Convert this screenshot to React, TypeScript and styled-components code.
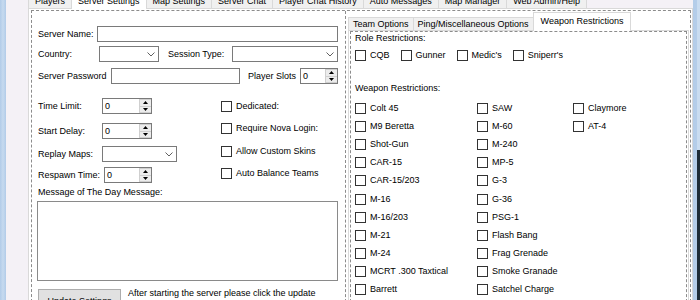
import styled, { createGlobalStyle } from "styled-components";

const GlobalStyle = createGlobalStyle`
  html, body {
    margin: 0;
    padding: 0;
  }
  body {
    width: 700px;
    height: 300px;
    overflow: hidden;
    background: #f3f1f4;
    font-family: "Liberation Sans", Arial, sans-serif;
    font-size: 9px;
    color: #000;
  }
`;

const mainTabs = [
  "Players",
  "Server Settings",
  "Map Settings",
  "Server Chat",
  "Player Chat History",
  "Auto Messages",
  "Map Manager",
  "Web Admin/Help",
];

const subTabs = ["Team Options", "Ping/Miscellaneous Options", "Weapon Restrictions"];

const roles = ["CQB", "Gunner", "Medic's", "Sniperr's"];

const weapons = [
  "Colt 45",
  "M9 Beretta",
  "Shot-Gun",
  "CAR-15",
  "CAR-15/203",
  "M-16",
  "M-16/203",
  "M-21",
  "M-24",
  "MCRT .300 Taxtical",
  "Barrett",
  "SAW",
  "M-60",
  "M-240",
  "MP-5",
  "G-3",
  "G-36",
  "PSG-1",
  "Flash Bang",
  "Frag Grenade",
  "Smoke Granade",
  "Satchel Charge",
  "Claymore",
  "AT-4",
];

const Chevron = () => (
  <svg width="8" height="5" viewBox="0 0 8 5">
    <polyline points="0.5,0.5 4,4 7.5,0.5" fill="none" stroke="#606060" strokeWidth="1" />
  </svg>
);

const Combo = ({ w }: { w: number }) => (
  <ComboBox $w={w}>
    <Chevron />
  </ComboBox>
);

const Numeric = ({ w }: { w: number }) => (
  <NumBox $w={w}>
    <NumValue>0</NumValue>
    <Spinner>
      <SpinButton>
        <svg width="5" height="3" viewBox="0 0 5 3">
          <polygon points="2.5,0 5,3 0,3" fill="#000" />
        </svg>
      </SpinButton>
      <SpinButton>
        <svg width="5" height="3" viewBox="0 0 5 3">
          <polygon points="0,0 5,0 2.5,3" fill="#000" />
        </svg>
      </SpinButton>
    </Spinner>
  </NumBox>
);

const Check = ({ label }: { label: string }) => (
  <CheckItem>
    <CheckBox />
    <span>{label}</span>
  </CheckItem>
);

const App: React.FC = () => {
  return (
    <>
      <GlobalStyle />
      <Frame>
        <LeftEdge />
        <Gutter />
        <Window>
          <TabStrip>
            {mainTabs.map((t) => (
              <Tab key={t} $active={t === "Server Settings"}>
                {t}
              </Tab>
            ))}
          </TabStrip>
          <Page>
            <OuterBox>
              <LeftPanel>
                <Row $mt={0}>
                  <FieldLabel $w={59}>Server Name:</FieldLabel>
                  <TextBox $w={241} />
                </Row>
                <Row $mt={4}>
                  <FieldLabel $w={61}>Country:</FieldLabel>
                  <Combo w={60} />
                  <FieldLabel $w={64} $ml={9}>
                    Session Type:
                  </FieldLabel>
                  <Combo w={106} />
                </Row>
                <Row $mt={6}>
                  <FieldLabel $w={73}>Server Password</FieldLabel>
                  <TextBox $w={129} />
                  <FieldLabel $w={52} $ml={8}>
                    Player Slots
                  </FieldLabel>
                  <Numeric w={38} />
                </Row>

                <Section>
                  <LeftCol>
                    <Row $mt={0}>
                      <FieldLabel $w={64}>Time Limit:</FieldLabel>
                      <Numeric w={50} />
                    </Row>
                    <Row $mt={9}>
                      <FieldLabel $w={64}>Start Delay:</FieldLabel>
                      <Numeric w={50} />
                    </Row>
                    <Row $mt={7}>
                      <FieldLabel $w={64}>Replay Maps:</FieldLabel>
                      <Combo w={75} />
                    </Row>
                    <Row $mt={5}>
                      <FieldLabel $w={66}>Respawn Time:</FieldLabel>
                      <Numeric w={48} />
                    </Row>
                  </LeftCol>
                  <RightCol>
                    <CheckRow $mt={0}>
                      <Check label="Dedicated:" />
                    </CheckRow>
                    <CheckRow $mt={6}>
                      <Check label="Require Nova Login:" />
                    </CheckRow>
                    <CheckRow $mt={7}>
                      <Check label="Allow Custom Skins" />
                    </CheckRow>
                    <CheckRow $mt={6}>
                      <Check label="Auto Balance Teams" />
                    </CheckRow>
                  </RightCol>
                </Section>

                <Caption>Message of The Day Message:</Caption>
                <MessageBox />
                <BottomRow>
                  <Button>Update Settings</Button>
                  <HelpText>
                    After starting the server please click the update
                    <br />
                    settings button so that the new settings are applied.
                  </HelpText>
                </BottomRow>
              </LeftPanel>

              <RightSection>
                <SubTabStrip>
                  {subTabs.map((t) => (
                    <SubTab key={t} $active={t === "Weapon Restrictions"}>
                      {t}
                    </SubTab>
                  ))}
                </SubTabStrip>
                <SubPage>
                  <InnerBox>
                    <Caption>Role Restrictions:</Caption>
                    <RoleRow>
                      {roles.map((r) => (
                        <Check key={r} label={r} />
                      ))}
                    </RoleRow>
                    <WeaponCaption>Weapon Restrictions:</WeaponCaption>
                    <WeaponGrid>
                      {weapons.map((w) => (
                        <Check key={w} label={w} />
                      ))}
                    </WeaponGrid>
                  </InnerBox>
                </SubPage>
              </RightSection>
            </OuterBox>
          </Page>
        </Window>
        <RightEdge>
          <BlueBand />
          <OuterBand>
            <BandTop />
            <BandBottom />
          </OuterBand>
        </RightEdge>
      </Frame>
    </>
  );
};

const Frame = styled.div`
  display: flex;
  width: 700px;
  height: 300px;
  overflow: hidden;
`;
const LeftEdge = styled.div`
  width: 6px;
  flex-shrink: 0;
  background: linear-gradient(90deg, #b1cbe8 0, #c6daef 50%, #b1cbe8 100%);
`;
const Gutter = styled.div`
  width: 22px;
  flex-shrink: 0;
  background: #f4f1f6;
`;
const Window = styled.div`
  width: 665px;
  flex-shrink: 0;
  display: flex;
  flex-direction: column;
  background: #f4f1f6;
`;
const RightEdge = styled.div`
  width: 7px;
  flex-shrink: 0;
  display: flex;
`;
const BlueBand = styled.div`
  width: 4px;
  background: #b4cde9;
`;
const OuterBand = styled.div`
  flex: 1;
  display: flex;
  flex-direction: column;
`;
const BandTop = styled.div`
  height: 150px;
  background: #c9dcf0;
`;
const BandBottom = styled.div`
  flex: 1;
  background: #1d2c38;
`;

const TabStrip = styled.div`
  display: flex;
  align-items: flex-end;
  height: 18px;
  margin-top: -10px;
  position: relative;
  z-index: 1;
`;
const Tab = styled.div<{ $active: boolean }>`
  display: flex;
  align-items: flex-end;
  box-sizing: border-box;
  height: ${(p) => (p.$active ? "19px" : "18px")};
  margin-bottom: ${(p) => (p.$active ? "-1px" : "0")};
  padding: 0 6px ${(p) => (p.$active ? "2px" : "1px")};
  line-height: 11px;
  white-space: nowrap;
  background: ${(p) => (p.$active ? "#fff" : "#f0f0f0")};
  border: 1px solid #d9d9d9;
  border-bottom: none;
  margin-left: -1px;
  &:first-child {
    margin-left: 0;
  }
`;

const Page = styled.div`
  flex: 1;
  display: flex;
  background: #fff;
  border: 1px solid #d9d9d9;
  border-bottom: none;
  padding: 1px 1px 0 2px;
`;
const OuterBox = styled.div`
  flex: 1;
  display: flex;
  border: 1px dashed #8c8c8c;
  border-bottom: none;
`;

const LeftPanel = styled.div`
  width: 314px;
  box-sizing: border-box;
  flex-shrink: 0;
  border-right: 1px dashed #8c8c8c;
  padding: 15px 0 0 6px;
  display: flex;
  flex-direction: column;
`;
const Row = styled.div<{ $mt: number }>`
  display: flex;
  align-items: center;
  height: 16px;
  margin-top: ${(p) => p.$mt}px;
`;
const FieldLabel = styled.span<{ $w: number; $ml?: number }>`
  width: ${(p) => p.$w}px;
  margin-left: ${(p) => p.$ml ?? 0}px;
  flex-shrink: 0;
  white-space: nowrap;
  line-height: 11px;
`;
const TextBox = styled.div<{ $w: number }>`
  width: ${(p) => p.$w}px;
  height: 16px;
  box-sizing: border-box;
  border: 1px solid #7a7a7a;
  background: #fff;
`;
const ComboBox = styled.div<{ $w: number }>`
  width: ${(p) => p.$w}px;
  height: 16px;
  box-sizing: border-box;
  border: 1px solid #7a7a7a;
  background: #fff;
  display: flex;
  align-items: center;
  justify-content: flex-end;
  padding-right: 3px;
`;
const NumBox = styled.div<{ $w: number }>`
  width: ${(p) => p.$w}px;
  height: 16px;
  box-sizing: border-box;
  border: 1px solid #7a7a7a;
  background: #fff;
  display: flex;
  align-items: stretch;
`;
const NumValue = styled.span`
  flex: 1;
  padding-left: 2px;
  line-height: 14px;
`;
const Spinner = styled.div`
  width: 12px;
  display: flex;
  flex-direction: column;
`;
const SpinButton = styled.div`
  flex: 1;
  display: flex;
  align-items: center;
  justify-content: center;
  background: #ececec;
  border: 1px solid #cfcfcf;
  border-right: none;
  & + & {
    border-top: none;
  }
`;

const Section = styled.div`
  display: flex;
  margin-top: 14px;
`;
const LeftCol = styled.div`
  width: 183px;
  display: flex;
  flex-direction: column;
`;
const RightCol = styled.div`
  display: flex;
  flex-direction: column;
`;
const CheckRow = styled.div<{ $mt: number }>`
  height: 16px;
  display: flex;
  align-items: center;
  margin-top: ${(p) => p.$mt}px;
`;
const CheckItem = styled.div`
  display: flex;
  align-items: center;
  gap: 4px;
  white-space: nowrap;
  line-height: 11px;
`;
const CheckBox = styled.div`
  width: 11px;
  height: 11px;
  box-sizing: border-box;
  border: 1px solid #333;
  background: #fff;
  flex-shrink: 0;
`;

const Caption = styled.div`
  line-height: 11px;
  margin-top: 4px;
  white-space: nowrap;
`;
const MessageBox = styled.div`
  width: 301px;
  height: 80px;
  margin: 3px 0 0 -1px;
  box-sizing: border-box;
  border: 1px solid #8a8a8a;
  background: #fff;
`;
const BottomRow = styled.div`
  display: flex;
  align-items: flex-start;
  margin-top: 8px;
`;
const Button = styled.div`
  width: 83px;
  height: 23px;
  box-sizing: border-box;
  border: 1px solid #adadad;
  background: #e1e1e1;
  display: flex;
  align-items: center;
  justify-content: center;
  white-space: nowrap;
`;
const HelpText = styled.div`
  margin: -2px 0 0 7px;
  line-height: 12px;
  white-space: nowrap;
`;

const RightSection = styled.div`
  flex: 1;
  display: flex;
  flex-direction: column;
  padding: 2px 1px 0 2px;
`;
const SubTabStrip = styled.div`
  display: flex;
  align-items: flex-end;
  height: 17px;
  position: relative;
  z-index: 1;
`;
const SubTab = styled.div<{ $active: boolean }>`
  display: flex;
  align-items: center;
  box-sizing: border-box;
  height: ${(p) => (p.$active ? "19px" : "13px")};
  margin-bottom: ${(p) => (p.$active ? "-1px" : "0")};
  padding: ${(p) => (p.$active ? "0 7px 1px" : "0 4px")};
  margin-left: -1px;
  line-height: 11px;
  white-space: nowrap;
  background: ${(p) => (p.$active ? "#fff" : "#f0f0f0")};
  border: 1px solid #d9d9d9;
  border-bottom: none;
  &:first-child {
    margin-left: 0;
  }
`;
const SubPage = styled.div`
  flex: 1;
  display: flex;
  border: 1px solid #d9d9d9;
  border-bottom: none;
  padding: 0 1px;
  background: #fff;
`;
const InnerBox = styled.div`
  flex: 1;
  border: 1px dashed #8c8c8c;
  border-bottom: none;
  padding: 0 0 0 4px;
  display: flex;
  flex-direction: column;
  & > ${Caption}:first-child {
    margin-top: 1px;
  }
`;
const RoleRow = styled.div`
  display: flex;
  align-items: center;
  gap: 11px;
  height: 16px;
  margin-top: 3px;
`;
const WeaponCaption = styled(Caption)`
  margin-top: 20px;
`;
const WeaponGrid = styled.div`
  display: grid;
  grid-template-columns: 122px 96px 1fr;
  grid-template-rows: repeat(11, 18.2px);
  grid-auto-flow: column;
  align-items: center;
  margin-top: 5px;
`;

export default App;
